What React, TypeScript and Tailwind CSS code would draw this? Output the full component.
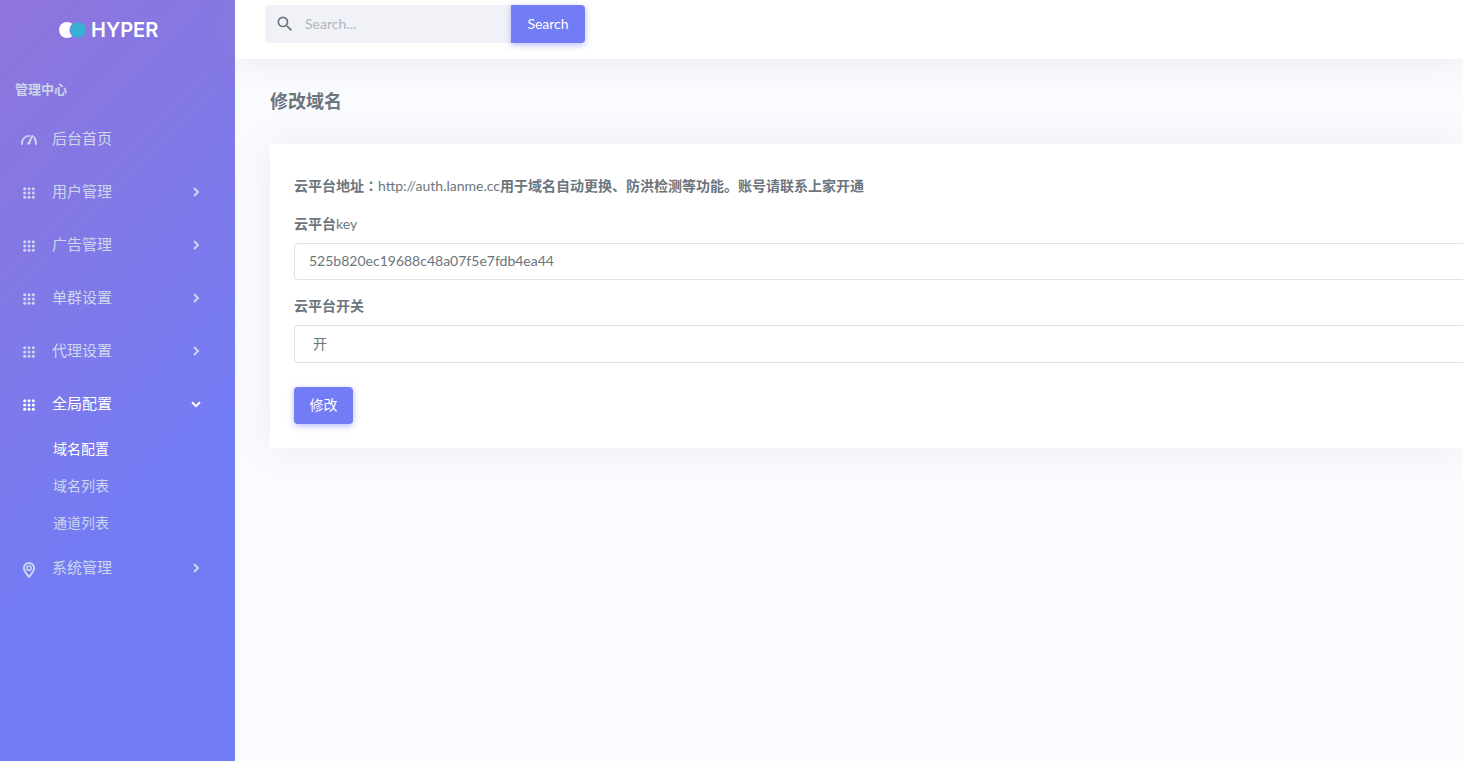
import type { ReactNode } from 'react';

type IconName = 'meter' | 'apps' | 'location';

interface MenuItem {
  label: string;
  icon: IconName;
  children?: string[];
}

const MENU: MenuItem[] = [
  { label: '后台首页', icon: 'meter' },
  { label: '用户管理', icon: 'apps', children: [] },
  { label: '广告管理', icon: 'apps', children: [] },
  { label: '单群设置', icon: 'apps', children: [] },
  { label: '代理设置', icon: 'apps', children: [] },
  { label: '全局配置', icon: 'apps', children: ['域名配置', '域名列表', '通道列表'] },
  { label: '系统管理', icon: 'location', children: [] },
];

function MenuIcon({ name }: { name: IconName }) {
  if (name === 'meter') {
    return (
      <svg viewBox="0 0 16 16" className="size-4 shrink-0" fill="none" stroke="currentColor" strokeLinecap="round">
        <path d="M1 13C1 8.6 3.8 5.2 8 4.9M13 6.2C14.4 8 15 10.2 15 13" strokeWidth="1.9" />
        <path d="M11.2 4.8 8 12" strokeWidth="1.9" />
        <circle cx="7.8" cy="12.3" r="1.4" fill="currentColor" stroke="none" />
      </svg>
    );
  }
  if (name === 'location') {
    return (
      <svg viewBox="0 0 16 16" className="mt-1 size-4 shrink-0" fill="none" stroke="currentColor">
        <path d="M8 15C5.5 12 2.9 9.2 2.9 6.1a5.1 5.1 0 0 1 10.2 0C13.1 9.2 10.5 12 8 15Z" strokeWidth="1.9" />
        <circle cx="8" cy="6.2" r="2.1" strokeWidth="1.5" />
      </svg>
    );
  }
  return (
    <svg viewBox="0 0 16 16" className="mt-0.5 size-4 shrink-0" fill="currentColor">
      {[3.7, 8, 12.3].map((cy) =>
        [3.7, 8, 12.3].map((cx) => <circle key={`${cx}-${cy}`} cx={cx} cy={cy} r="1.5" />),
      )}
    </svg>
  );
}

function Chevron({ open }: { open: boolean }) {
  return (
    <svg viewBox="0 0 12 12" className="size-3" fill="none" stroke="currentColor" strokeWidth="2">
      <path d={open ? 'M2 4.2l4 4 4-4' : 'M4 2l4 4-4 4'} />
    </svg>
  );
}

function Logo() {
  return (
    <a href="#" className="mt-5 ml-[59px] flex h-5 items-center gap-1 text-white">
      <svg viewBox="0 0 28 18" className="h-[18px] w-7">
        <circle cx="8" cy="9" r="8" fill="#fff" />
        <circle cx="19" cy="9" r="8.5" fill="#8676dd" />
        <circle cx="19" cy="9" r="7.7" fill="#35b1d3" />
      </svg>
      <span className="font-[Inter,sans-serif] text-xl leading-5 font-semibold">HYPER</span>
    </a>
  );
}

function Sidebar() {
  return (
    <aside className="flex w-[235px] shrink-0 flex-col bg-[linear-gradient(135deg,#8f75da_0%,#727cf5_68%)] text-[#cdd7ec]">
      <Logo />
      <h2 className="mt-[39px] pl-[15px] text-[13px] leading-5 font-bold">管理中心</h2>
      <nav className="mt-[13px]">
        <ul>
          {MENU.map((item) => {
            const open = !!item.children?.length;
            return (
              <li key={item.label}>
                <a
                  href="#"
                  className={`flex h-[53px] items-center pr-[33px] pl-[21px] text-[15px] ${open ? 'text-white' : ''}`}
                >
                  <MenuIcon name={item.icon} />
                  <span className="ml-[15px] flex-1">{item.label}</span>
                  {item.children && <Chevron open={open} />}
                </a>
                {open && (
                  <ul>
                    {item.children?.map((child, i) => (
                      <li key={child}>
                        <a href="#" className={`flex h-[37px] items-center pl-[53px] text-sm ${i === 0 ? 'text-white' : ''}`}>
                          {child}
                        </a>
                      </li>
                    ))}
                  </ul>
                )}
              </li>
            );
          })}
        </ul>
      </nav>
    </aside>
  );
}

function Topbar() {
  return (
    <header className="flex h-[59px] shrink-0 items-start bg-white pt-[5px] pl-[30px] shadow-[0_0_35px_0_rgba(154,161,171,0.2)]">
      <form className="flex h-[38px]">
        <label className="flex w-[246px] items-center rounded-l bg-[#f1f2f8] pl-[10px]">
          <svg viewBox="0 0 24 24" className="size-5 shrink-0 fill-[#6c757d]">
            <path d="M9.5 3A6.5 6.5 0 0 1 16 9.5c0 1.61-.59 3.09-1.56 4.23l.27.27h.79l5 5-1.5 1.5-5-5v-.79l-.27-.27A6.516 6.516 0 0 1 9.5 16 6.5 6.5 0 0 1 9.5 3m0 2C7 5 5 7 5 9.5S7 14 9.5 14 14 12 14 9.5 12 5 9.5 5z" />
          </svg>
          <input
            type="text"
            aria-label="Search"
            placeholder="Search..."
            className="ml-[10px] w-full bg-transparent text-sm outline-none placeholder:text-[#adb5bd]"
          />
        </label>
        <button
          type="button"
          className="w-[74px] rounded-r-sm bg-[#727cf5] text-sm text-white shadow-[0_2px_6px_0_rgba(114,124,245,0.5)]"
        >
          Search
        </button>
      </form>
    </header>
  );
}

function Latin({ children }: { children: ReactNode }) {
  return <span className="font-normal">{children}</span>;
}

export default function App() {
  return (
    <div className="flex min-h-screen overflow-hidden bg-[#fafbfe] font-[Lato,'Noto_Sans_CJK_SC',sans-serif] text-[#6c757d]">
      <Sidebar />
      <div className="flex min-w-0 flex-1 flex-col">
        <Topbar />
        <main className="pl-[35px]">
          <h1 className="py-7 text-lg leading-[29px] font-bold">修改域名</h1>
          <form className="bg-white py-6 pl-6 text-sm shadow-[0_0_35px_0_rgba(154,161,171,0.15)]">
            <p className="pt-[7px] leading-5 font-bold">
              云平台地址<span className="font-['Noto_Sans_CJK_TC',sans-serif]">：</span>
              <Latin>http://auth.lanme.cc</Latin>用于域名自动更换、防洪检测等功能。账号请联系上家开通
            </p>
            <label htmlFor="key" className="mt-[18px] block leading-5 font-bold">
              云平台<Latin>key</Latin>
            </label>
            <input
              id="key"
              type="text"
              defaultValue="525b820ec19688c48a07f5e7fdb4ea44"
              className="mt-[9px] h-[37px] w-full rounded-l border border-r-0 border-[#dee2e6] bg-white px-[14px] pb-0.5 outline-none"
            />
            <label htmlFor="switch" className="mt-4 block leading-5 font-bold">
              云平台开关
            </label>
            <select
              id="switch"
              className="mt-[9px] block h-[38px] w-full appearance-none rounded-l border border-r-0 border-[#dee2e6] bg-white px-[18px] outline-none"
            >
              <option>开</option>
              <option>关</option>
            </select>
            <button
              type="button"
              className="mt-6 block h-[37px] w-[59px] rounded-sm bg-[#727cf5] pb-0.5 text-white shadow-[0_2px_6px_0_rgba(114,124,245,0.5)]"
            >
              修改
            </button>
          </form>
        </main>
      </div>
    </div>
  );
}
